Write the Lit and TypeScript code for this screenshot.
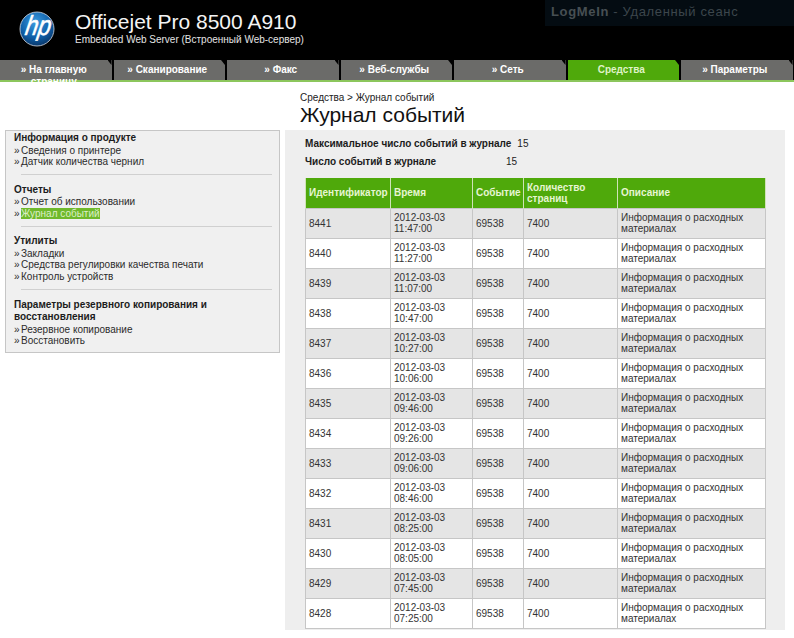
import { LitElement, html, css } from 'lit';
import { customElement } from 'lit/decorators.js';

const TABS = [
  { label: '» На главную страницу' },
  { label: '» Сканирование' },
  { label: '» Факс' },
  { label: '» Веб-службы' },
  { label: '» Сеть' },
  { label: 'Средства', active: true },
  { label: '» Параметры' },
];

const MENU = [
  { title: 'Информация о продукте', items: ['Сведения о принтере', 'Датчик количества чернил'] },
  { title: 'Отчеты', items: ['Отчет об использовании', 'Журнал событий'] },
  { title: 'Утилиты', items: ['Закладки', 'Средства регулировки качества печати', 'Контроль устройств'] },
  { title: 'Параметры резервного копирования и восстановления', items: ['Резервное копирование', 'Восстановить'] },
];

const ROWS = [
  ['8441', '11:47:00'],
  ['8440', '11:27:00'],
  ['8439', '11:07:00'],
  ['8438', '10:47:00'],
  ['8437', '10:27:00'],
  ['8436', '10:06:00'],
  ['8435', '09:46:00'],
  ['8434', '09:26:00'],
  ['8433', '09:06:00'],
  ['8432', '08:46:00'],
  ['8431', '08:25:00'],
  ['8430', '08:05:00'],
  ['8429', '07:45:00'],
  ['8428', '07:25:00'],
];

@customElement('app-root')
export class AppRoot extends LitElement {
  static styles = css`
    :host {
      display: block;
      width: 794px;
      height: 638px;
      overflow: hidden;
      background: #fff;
      font-family: 'Liberation Sans', Arial, sans-serif;
      font-size: 10px;
      color: #222;
    }

    header {
      height: 60px;
      background: #000;
      display: flex;
      position: relative;
    }
    .logo {
      width: 36px;
      height: 36px;
      margin: 11px 0 0 19px;
    }
    .brand {
      margin-left: 20px;
      padding-top: 10px;
    }
    .brand h2 {
      margin: 0;
      font-size: 21px;
      line-height: 24px;
      font-weight: normal;
      color: #f4f4f4;
    }
    .brand p {
      margin: 0;
      font-size: 10px;
      line-height: 12px;
      color: #e4e4e4;
    }
    .logmein {
      position: absolute;
      top: 0;
      right: 0;
      width: 243px;
      height: 26px;
      padding-left: 6px;
      background: #040c12;
      color: #3c464c;
      font-size: 13px;
      line-height: 23px;
      letter-spacing: 0.65px;
    }
    .logmein b {
      color: #474f53;
    }

    nav {
      display: grid;
      grid-template-columns: repeat(7, 111.5px);
      column-gap: 2px;
      height: 20px;
      background: #000;
      border-bottom: 2px solid #8cc65c;
    }
    .tab {
      position: relative;
      height: 20px;
      box-sizing: border-box;
      padding: 4px 12px 0 8px;
      background: #6b6b69;
      color: #fff;
      font-size: 10px;
      font-weight: bold;
      line-height: 12px;
      text-align: center;
    }
    .tab::after {
      content: '';
      position: absolute;
      top: 0;
      right: 0;
      width: 4px;
      height: 5px;
      background: #000;
      clip-path: polygon(0 0, 100% 0, 100% 100%);
    }
    .tab.active {
      background: #4fa90b;
      color: #dff3c6;
    }

    .crumbs {
      margin-left: 300px;
      padding-top: 10px;
      height: 48px;
      box-sizing: border-box;
      color: #222;
      font-size: 10px;
      line-height: 12px;
    }
    .crumbs h1 {
      margin: 0;
      font-size: 21px;
      line-height: 22px;
      font-weight: normal;
      color: #111;
    }

    .content {
      display: flex;
      align-items: flex-start;
      padding-left: 5px;
      gap: 5px;
    }

    aside {
      width: 275px;
      height: 223px;
      box-sizing: border-box;
      padding: 1px 8px 0;
      background: #f0f0f0;
      border: 1px solid #c6c6c6;
    }
    aside section + section {
      margin-top: 6.5px;
    }
    aside section + section::before {
      content: '';
      display: block;
      width: 251px;
      height: 1px;
      margin: 0 0 8.5px 7px;
      background: #d0d0d0;
    }
    aside h3 {
      margin: 0;
      font-size: 10px;
      line-height: 12.5px;
      font-weight: bold;
      color: #1c1c1c;
    }
    aside .item {
      line-height: 11.6px;
      color: #2b2b2b;
    }
    aside .bullet {
      display: inline-block;
      width: 7px;
    }
    aside .current {
      background: #6fb92b;
      color: #dcefc8;
    }

    main {
      width: 500px;
      height: 500px;
      box-sizing: border-box;
      padding: 7px 0 0 20px;
      background: #eeeeee;
    }
    .stat {
      display: flex;
      height: 12px;
      align-items: center;
    }
    .stat b {
      color: #1c1c1c;
    }
    .stat.max {
      margin-bottom: 6px;
    }
    .stat.max b {
      margin-right: 6px;
    }
    .stat.cur b {
      width: 201px;
    }

    table {
      border-collapse: collapse;
      table-layout: fixed;
      width: 460px;
      margin-top: 11px;
      font-size: 10px;
      line-height: 11px;
      background: #fff;
      color: #333;
    }
    th {
      height: 30px;
      padding: 0 3px;
      box-sizing: border-box;
      background: #4fa90b;
      color: #e6f5d2;
      text-align: left;
      font-weight: bold;
      border: 1px solid #cfe3b8;
      border-top: none;
      border-bottom: none;
    }
    td {
      height: 30px;
      padding: 0 3px;
      box-sizing: border-box;
      border: 1px solid #c6c6c6;
    }
    tr.alt td {
      background: #e5e5e5;
    }
  `;

  private renderLogo() {
    return html`
      <svg class="logo" viewBox="0 0 36 36" aria-label="hp">
        <defs>
          <radialGradient id="orb" cx="45%" cy="30%" r="75%">
            <stop offset="0" stop-color="#3a9be0"></stop>
            <stop offset="0.6" stop-color="#0f5fa8"></stop>
            <stop offset="1" stop-color="#08305f"></stop>
          </radialGradient>
        </defs>
        <circle cx="18" cy="18" r="17" fill="url(#orb)" stroke="#d4dbe4" stroke-width="0.8"></circle>
        <g transform="translate(18 24) skewX(-10) scale(1 1.2)">
          <text
            x="0"
            y="0"
            text-anchor="middle"
            font-family="Liberation Sans"
            font-size="23"
            font-weight="normal"
            font-style="italic"
            fill="#fff"
            stroke="#fff"
            stroke-width="0.5"
          >hp</text>
        </g>
      </svg>
    `;
  }

  render() {
    return html`
      <header>
        ${this.renderLogo()}
        <div class="brand">
          <h2>Officejet Pro 8500 A910</h2>
          <p>Embedded Web Server (Встроенный Web-сервер)</p>
        </div>
        <div class="logmein"><b>LogMeIn</b> - Удаленный сеанс</div>
      </header>
      <nav>
        ${TABS.map(t => html`<div class="tab ${t.active ? 'active' : ''}">${t.label}</div>`)}
      </nav>
      <div class="crumbs">
        Средства &gt; Журнал событий
        <h1>Журнал событий</h1>
      </div>
      <div class="content">
        <aside>
          ${MENU.map(
            s => html`
              <section>
                <h3>${s.title}</h3>
                ${s.items.map(
                  i => html`<div class="item"><span class="bullet">»</span><span class=${i === 'Журнал событий' ? 'current' : ''}>${i}</span></div>`,
                )}
              </section>
            `,
          )}
        </aside>
        <main>
          <div class="stat max"><b>Максимальное число событий в журнале</b> 15</div>
          <div class="stat cur"><b>Число событий в журнале</b> 15</div>
          <table>
            <colgroup>
              <col style="width:85px" />
              <col style="width:82px" />
              <col style="width:51px" />
              <col style="width:94px" />
              <col style="width:148px" />
            </colgroup>
            <thead>
              <tr>
                <th>Идентификатор</th>
                <th>Время</th>
                <th>Событие</th>
                <th>Количество страниц</th>
                <th>Описание</th>
              </tr>
            </thead>
            <tbody>
              ${ROWS.map(
                (r, i) => html`
                  <tr class=${i % 2 === 0 ? 'alt' : ''}>
                    <td>${r[0]}</td>
                    <td>2012-03-03<br />${r[1]}</td>
                    <td>69538</td>
                    <td>7400</td>
                    <td>Информация о расходных материалах</td>
                  </tr>
                `,
              )}
            </tbody>
          </table>
        </main>
      </div>
    `;
  }
}
